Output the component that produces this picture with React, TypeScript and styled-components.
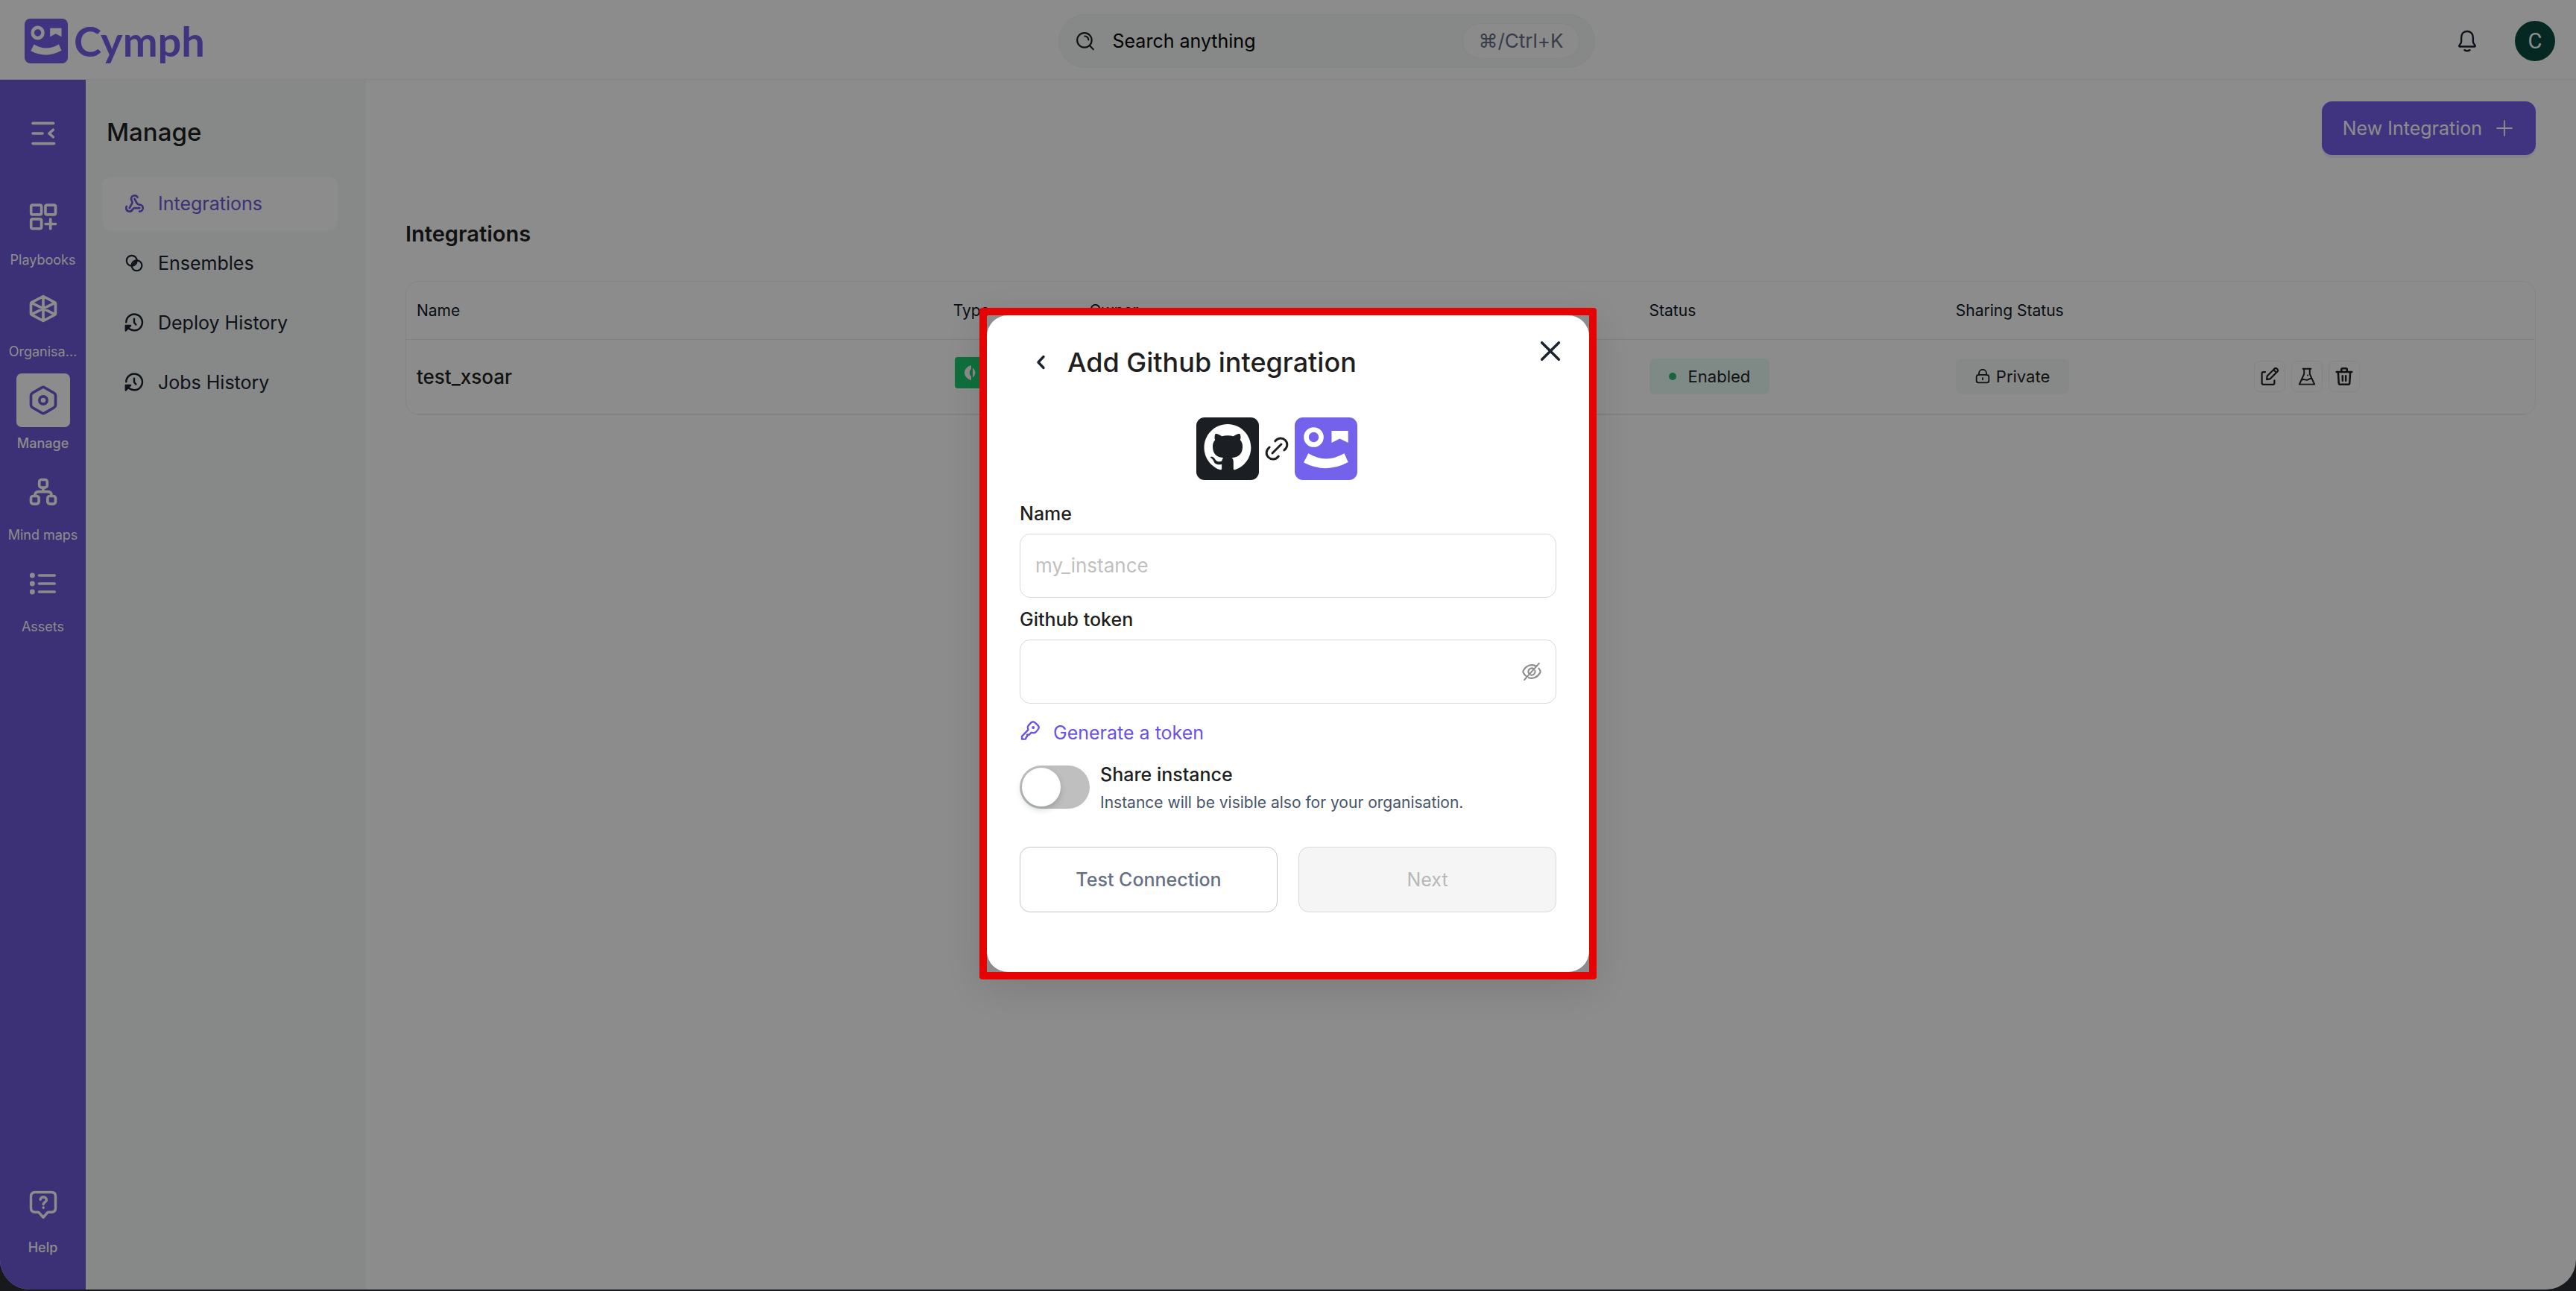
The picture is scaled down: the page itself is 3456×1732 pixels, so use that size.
import React, { useState } from "react";
import styled, { createGlobalStyle, css } from "styled-components";

const purple = "#6d59d8";
const brand = "#7660e9";
const ink = "#1f1f1f";
const navy = "#1b2230";

const GlobalStyle = createGlobalStyle`
  *, *::before, *::after { box-sizing: border-box; }
  body {
    margin: 0;
    background: #2c2e36;
    font-family: Inter, "Noto Sans", sans-serif;
    color: ${ink};
  }
  button, input { font: inherit; color: inherit; }
  button { cursor: pointer; }
  h1, h2, p { margin: 0; }
  a { text-decoration: none; }
`;

/* ---------- icons ---------- */

const Icon = styled.svg.attrs({ viewBox: "0 0 24 24", "aria-hidden": true })<{ $size: number; $stroke?: number }>`
  display: block;
  flex: none;
  width: ${(p) => p.$size}px;
  height: ${(p) => p.$size}px;
  fill: none;
  stroke: currentColor;
  stroke-width: ${(p) => p.$stroke ?? 2};
  stroke-linecap: round;
  stroke-linejoin: round;
`;

const CollapseIcon = () => (
  <Icon $size={38} $stroke={2.3}><path d="M3.2 3.400h17.400M3.200 12h8.200M3.200 20.600h18M20.400 9l-3.400 3 3.400 3" /></Icon>
);
const PlaybooksIcon = () => (
  <Icon $size={44}>
    <rect x="3.1" y="3.3" width="7.6" height="7" rx="1.2" />
    <rect x="13.6" y="3.3" width="7.4" height="7" rx="1.2" />
    <rect x="3.1" y="13.6" width="7.6" height="7" rx="1.2" />
    <path d="M17.300 13.700v7M13.700 17.200h7.300" />
  </Icon>
);
const OrganisationIcon = () => (
  <Icon $size={44} $stroke={2}>
    <path d="M12 3l8.6 4.6q.4.3.4.8v7.2q0 .5-.4.8L12 21l-8.6-4.6q-.4-.3-.4-.8V8.400q0-.5.4-.8zM12 3v18M3.300 7.700l17.400 8.600M20.700 7.700L3.300 16.300" />
  </Icon>
);
const ManageIcon = () => (
  <Icon $size={44}>
    <path d="M11 2.700q1-.6 2 0l6.900 4q1.100.7 1.100 1.900v6.800q0 1.200-1.100 1.900l-6.900 4q-1 .6-2 0l-6.900-4Q3 16.600 3 15.400V8.600q0-1.200 1.100-1.900z" />
    <circle cx="12" cy="12" r="2.800" />
  </Icon>
);
const MindmapIcon = () => (
  <Icon $size={44}>
    <rect x="9.100" y="3" width="5.800" height="5.800" rx="1.700" />
    <rect x="3" y="15" width="5.800" height="5.800" rx="1.700" />
    <rect x="15.200" y="15" width="5.800" height="5.800" rx="1.700" />
    <path d="M12 9v2.800M6 14.600c0-2 .9-2.800 2.600-2.800h6.800c1.700 0 2.600.8 2.600 2.800" />
  </Icon>
);
const AssetsIcon = () => (
  <Icon $size={44}>
    <path d="M9 6h11.300M9 12h11.300M9 18h11.300" />
    <g fill="currentColor" stroke="none">
      <circle cx="4" cy="6" r="1.900" /><circle cx="4" cy="12" r="1.900" /><circle cx="4" cy="18" r="1.900" />
    </g>
  </Icon>
);
const HelpIcon = () => (
  <Icon $size={44} $stroke={1.9}>
    <path d="M6 3h12q3 0 3 3v8.600q0 3-3 3h-2q-.8 0-1.300.7L12 21.400l-2.700-3.100q-.5-.7-1.300-.7H6q-3 0-3-3V6q0-3 3-3z" />
    <path d="M9.900 8.300c.2-1.200 1-1.800 2.200-1.800 1.300 0 2.300.8 2.300 2.100 0 1.600-2.300 1.700-2.300 3.200M12.100 14.200v.1" />
  </Icon>
);
const WebhookIcon = () => (
  <Icon $size={27} $stroke={2.4}>
    <path d="M18 16.980h-5.990c-1.100 0-1.950.94-2.480 1.900A4 4 0 0 1 2 17c.01-.7.200-1.400.57-2" />
    <path d="m6 17 3.130-5.780c.53-.97.1-2.180-.5-3.100a4 4 0 1 1 6.890-4.060" />
    <path d="m12 6 3.130 5.730C15.660 12.700 16.900 13 18 13a4 4 0 0 1 0 8" />
  </Icon>
);
const EnsemblesIcon = () => (
  <Icon $size={26}>
    <circle cx="9" cy="9" r="6.400" /><circle cx="15.200" cy="15" r="6.400" />
    <path d="M10.200 14.200l4.200-4.200" />
  </Icon>
);
const HistoryIcon = () => (
  <Icon $size={28} $stroke={2.1}>
    <path d="M2.800 11.400A9.300 9.300 0 1 1 5.400 18M12 7.400v4.400l2 2.400" />
    <path d="M2.400 21v-5.600h5.400z" fill="currentColor" />
  </Icon>
);
const SearchIcon = () => (
  <Icon $size={26}>
    <circle cx="11" cy="11" r="9" /><path d="M17.600 17.800l4.400 4.600M11.400 6a5 5 0 0 1 4.600 4.600" />
  </Icon>
);
const BellIcon = () => (
  <Icon $size={30} $stroke={1.900}>
    <path d="M12 1.600c-4 0-6.300 2.800-6.300 6.600v4.300c0 1.200-.7 2.300-1.500 3.300-.8 1.100-1.200 2.200-.2 2.200h16c1 0 .6-1.100-.2-2.200-.8-1-1.500-2.100-1.500-3.300V8.200c0-3.800-2.300-6.600-6.300-6.600zM9.200 21.700q2.800 1.700 5.600 0" />
  </Icon>
);
const PlusIcon = () => (<Icon $size={28} $stroke={1.600}><path d="M12 3.500v17M3.500 12h17" /></Icon>);
const LockIcon = () => (
  <Icon $size={20} $stroke={2.200}>
    <rect x="2" y="9.500" width="20" height="12.500" rx="3.500" />
    <path d="M6 9.500V7a6 6 0 0 1 12 0v2.500M12 14.500v2.500" />
  </Icon>
);
const EditIcon = () => (
  <Icon $size={26}>
    <path d="M6.500 6.500H4q-1.600 0-1.600 1.600v12.300Q2.400 22 4 22h12.300q1.600 0 1.600-1.600V17" />
    <path d="M8.400 15.800l.5-4.200L18.300 2.200q1.200-1 2.500.2l.9.900q1.100 1.300.1 2.500l-9.300 9.300zM17 4l3.200 3.200" />
  </Icon>
);
const FlaskIcon = () => (
  <Icon $size={26} $stroke={1.800}>
    <path d="M7 2.500h10M8.500 2.800v6.200L2.600 21.800h18.800L15.500 9V2.800M5.600 16.200c3-1.600 4.800.9 7.200 0s3-2 5-1.500M13 10.500v.1" />
  </Icon>
);
const TrashIcon = () => (
  <Icon $size={26} $stroke={2.300}>
    <path d="M2.500 6.500h19M8.500 6.200V3.500q0-1.500 1.500-1.500h4q1.500 0 1.500 1.500v2.700M4.500 6.800l.8 13.600q.2 1.600 1.700 1.600h10q1.500 0 1.700-1.600l.8-13.600M10 11.400v6M14 11.400v6" />
  </Icon>
);
const ChevronIcon = () => (<Icon $size={24} $stroke={3.400}><path d="M16 4.500L9 12l7 7.500" /></Icon>);
const CloseIcon = () => (<Icon $size={32} $stroke={2.700}><path d="M3.500 3.500l17 17M20.500 3.500l-17 17" /></Icon>);
const LinkIcon = () => (
  <Icon $size={36}>
    <path d="M10.500 5.200c2.600-3.300 6.600-3.300 9-.9 2.500 2.500 2.400 6.200-.9 9M13.500 18.800c-2.600 3.300-6.600 3.300-9 .9-2.500-2.500-2.400-6.200.9-9M8 16l8-8" />
  </Icon>
);
const EyeOffIcon = () => (
  <Icon $size={28} $stroke={1.800}>
    <path d="M17.500 6C12 2.700 5.500 4.800 2.200 11.200q-.4.800 0 1.600c.9 1.900 2 3.300 3.300 4.400M20 8.300c.7.900 1.300 1.800 1.800 2.900q.4.800 0 1.600C18.800 18.600 13.500 20.700 8.500 19M14 8.600A4 4 0 0 0 8.600 14M15.700 10.700A4 4 0 0 1 11 15.900M20.500 2.500l-17 19" />
  </Icon>
);
const KeyIcon = () => (
  <Icon $size={28}>
    <path d="M13.200 2.900q2-1.700 4.300 0l3.500 3.200q1.900 2.100.4 4.300l-2.600 3.200q-1.300 1.400-3.300 1.100l-2.200-.3-2.300 2.500H8.700v2.200l-1.300.7-.3 1.600-.9.600H2.600v-3.300l7.200-7.400-.5-2.600q-.1-1.500.9-2.600z" />
    <circle cx="15.600" cy="8.600" r=".7" fill="currentColor" />
  </Icon>
);

const Mark = styled.svg.attrs({ viewBox: "0 0 84 84", "aria-hidden": true, preserveAspectRatio: "none" })<{ $w: number; $h: number }>`
  display: block;
  flex: none;
  width: ${(p) => p.$w}px;
  height: ${(p) => p.$h}px;
`;
const CymphMark = ({ w, h, fill }: { w: number; h: number; fill: string }) => (
  <Mark $w={w} $h={h}>
    <rect width="84" height="84" rx="11" fill={fill} />
    <circle cx="25.500" cy="26.500" r="10" fill="none" stroke="#fff" strokeWidth="6.600" />
    <path d="M49.500 18h22.200v16l-11.200-5.500-11 5.500z" fill="#fff" />
    <path d="M18.300 48.300Q42 62.500 66.500 48.300L71.700 60Q42 76 12 60.500z" fill="#fff" />
  </Mark>
);
const GithubMark = () => (
  <Mark $w={84} $h={84}>
    <rect width="84" height="84" rx="11" fill="#1b1f23" />
    <path
      transform="translate(10.500 9) scale(3.930)"
      fill="#fff"
      d="M8 0C3.580 0 0 3.580 0 8c0 3.540 2.290 6.530 5.470 7.590.4.070.55-.17.55-.38 0-.19-.01-.82-.01-1.490-2.010.37-2.530-.49-2.690-.94-.09-.23-.48-.94-.82-1.130-.28-.15-.68-.52-.01-.53.63-.01 1.080.58 1.230.82.72 1.210 1.870.87 2.330.66.07-.52.28-.87.51-1.070-1.780-.2-3.640-.89-3.640-3.950 0-.87.31-1.590.82-2.150-.08-.2-.36-1.020.08-2.120 0 0 .67-.21 2.200.82.64-.18 1.320-.27 2-.27s1.360.09 2 .27c1.530-1.040 2.200-.82 2.200-.82.44 1.100.16 1.920.08 2.120.51.56.82 1.270.82 2.150 0 3.070-1.870 3.750-3.650 3.950.29.25.54.73.54 1.480 0 1.070-.01 1.930-.01 2.200 0 .21.15.46.55.38A8.010 8.010 0 0 0 16 8c0-4.420-3.580-8-8-8"
    />
  </Mark>
);

/* ---------- shell ---------- */

const Shell = styled.div`
  display: flex;
  flex-direction: column;
  min-height: calc(100vh - 2px);
  margin-bottom: 2px;
  background: #fff;
  border-radius: 0 0 40px 40px;
  overflow: hidden;
`;
const TopBar = styled.header`
  display: flex;
  align-items: center;
  justify-content: space-between;
  height: 107px;
  padding: 4px 28px 0 33px;
  border-bottom: 1px solid #f0f1f1;
`;
const Brand = styled.a`
  display: flex;
  align-items: center;
  gap: 8px;
  width: 240px;
  color: ${brand};
  font: 700 56px/60px Lato, sans-serif;
`;
const SearchBox = styled.label`
  display: flex;
  align-items: center;
  gap: 24px;
  width: 720px;
  height: 72px;
  padding: 0 20px 0 22px;
  border: 1px solid #f0f3f2;
  border-radius: 36px;
  background: #f5faf8;
`;
const SearchInput = styled.input`
  flex: 1;
  min-width: 0;
  padding: 0;
  border: 0;
  outline: 0;
  background: none;
  font-size: 25px;
  &::placeholder { color: #000; opacity: 1; }
`;
const Shortcut = styled.kbd`
  padding: 0 20px;
  border: 1px solid #f0f3f2;
  border-radius: 24px;
  background: #fdfdfd;
  color: #667085;
  font: 400 26px/46px Inter, "DejaVu Sans", sans-serif;
`;
const Account = styled.div`
  display: flex;
  align-items: center;
  gap: 40px;
`;
const PlainButton = styled.button`
  display: grid;
  place-items: center;
  width: 48px;
  height: 48px;
  padding: 0;
  border: 0;
  background: none;
  color: ${navy};
`;
const Avatar = styled.button`
  width: 54px;
  height: 54px;
  padding: 0;
  border: 0;
  border-radius: 50%;
  background: #0a4a40;
  color: #fff;
  font: 400 29px/54px Roboto, sans-serif;
`;
const Body = styled.div`
  display: flex;
  flex: 1;
`;

/* ---------- sidebar ---------- */

const Rail = styled.nav`
  display: flex;
  flex-direction: column;
  align-items: center;
  width: 115px;
  padding: 48px 0 43px;
  background: ${purple};
  color: #fff;
`;
const RailToggle = styled(PlainButton)`
  margin-bottom: 52px;
  color: #fff;
`;
const RailList = styled.div`
  display: flex;
  flex: 1;
  flex-direction: column;
  gap: 16px;
`;
const RailItem = styled.a<{ $active?: boolean; $last?: boolean }>`
  display: flex;
  flex-direction: column;
  align-items: center;
  gap: 8px;
  color: #fff;
  font-size: 18px;
  font-weight: ${(p) => (p.$active ? 500 : 400)};
  line-height: 27px;
  ${(p) => p.$last && css`margin-top: auto;`}
`;
const RailIcon = styled.span<{ $active?: boolean }>`
  display: grid;
  place-items: center;
  width: 72px;
  height: 72px;
  border-radius: 7px;
  ${(p) => p.$active && css`background: #fff; color: ${purple};`}
`;
const SubNav = styled.aside`
  width: 375px;
  padding: 48px 36px 0 22px;
  border-right: 1px solid #eff2f1;
  background: #f6faf8;
`;
const SubTitle = styled.h1`
  margin-bottom: 38px;
  padding-left: 6px;
  font-size: 33px;
  font-weight: 500;
  line-height: 44px;
`;
const SubList = styled.div`
  display: flex;
  flex-direction: column;
  gap: 8px;
`;
const SubLink = styled.a<{ $active?: boolean }>`
  display: flex;
  align-items: center;
  gap: 18px;
  height: 72px;
  padding: 0 29px;
  border-radius: 12px;
  background: ${(p) => (p.$active ? "#fff" : "transparent")};
  color: ${(p) => (p.$active ? purple : navy)};
  font-size: 25px;
`;
const SubIcon = styled.span`
  display: grid;
  place-items: center;
  width: 28px;
`;

/* ---------- main ---------- */

const Main = styled.main`
  flex: 1;
  min-width: 0;
  padding: 29px 54px 0;
`;
const Actions = styled.div`
  display: flex;
  justify-content: flex-end;
  margin-bottom: 86px;
`;
const PrimaryButton = styled.button`
  display: flex;
  align-items: center;
  gap: 16px;
  height: 72px;
  padding: 0 28px;
  border: 0;
  border-radius: 14px;
  background: ${brand};
  box-shadow: 0 4px 0 rgba(109, 89, 216, 0.1);
  color: #fff;
  font-size: 25px;
`;
const Heading = styled.h2`
  margin-bottom: 43px;
  font-size: 29px;
  font-weight: 600;
  line-height: 40px;
`;
const TableFrame = styled.div`
  overflow: hidden;
  border: 1px solid #f0f0f0;
  border-radius: 18px;
`;
const Table = styled.table`
  width: 100%;
  border-collapse: collapse;
  table-layout: fixed;
`;
const Th = styled.th<{ $w: number }>`
  width: ${(p) => p.$w}%;
  height: 77px;
  padding: 0 14px;
  border-bottom: 1px solid #eaeaea;
  color: #101828;
  font-size: 21px;
  font-weight: 400;
  text-align: left;
`;
const Td = styled.td<{ $strong?: boolean }>`
  height: 100px;
  padding: 0 14px;
  border-bottom: 1px solid #eaeaea;
  font-size: ${(p) => (p.$strong ? 26 : 22)}px;
  font-weight: ${(p) => (p.$strong ? 500 : 400)};
`;
const TypeBadge = styled.svg.attrs({ viewBox: "0 0 42 42", "aria-hidden": true })`
  display: block;
  width: 42px;
  height: 42px;
  margin: 0 0 10px 2px;
`;
const Badge = styled.span<{ $tone: string }>`
  display: inline-flex;
  align-items: center;
  gap: 8px;
  height: 48px;
  padding: 0 26px;
  border-radius: 8px;
  background: ${(p) => p.$tone};
  font-size: 22px;
`;
const Dot = styled.span`
  width: 10px;
  height: 10px;
  margin-right: 8px;
  border-radius: 50%;
  background: #2bb673;
`;
const RowActions = styled.div`
  display: flex;
  gap: 8px;
`;
const RowButton = styled(PlainButton)`
  width: 42px;
  height: 42px;
  border: 1px solid #f0f0f0;
  border-radius: 8px;
  color: ${ink};
`;

/* ---------- dialog ---------- */

const Overlay = styled.div`
  position: fixed;
  inset: 0;
  display: grid;
  place-items: center;
  padding-bottom: 6px;
  background: rgba(0, 0, 0, 0.45);
`;
const Frame = styled.div`
  width: 828px;
  border: 10px solid #e60303;
  border-radius: 4px;
  box-shadow: 0 14px 56px rgba(0, 0, 0, 0.12);
`;
const Dialog = styled.form`
  position: relative;
  display: flex;
  flex-direction: column;
  padding: 39px 44px 80px;
  border-radius: 28px;
  background: #fff;
`;
const CloseButton = styled(PlainButton)`
  position: absolute;
  top: 24px;
  right: 28px;
`;
const DialogHead = styled.div`
  display: flex;
  align-items: center;
  gap: 12px;
  margin: 0 0 50px 4px;
`;
const DialogTitle = styled.h2`
  font-size: 36px;
  font-weight: 500;
  line-height: 48px;
`;
const LogoRow = styled.div`
  display: flex;
  align-items: center;
  justify-content: center;
  gap: 6px;
  margin-bottom: 28px;
  padding-right: 30px;
`;
const Field = styled.div`
  display: flex;
  flex-direction: column;
  gap: 10px;
  margin-bottom: 12px;
`;
const Label = styled.label`
  font-size: 25px;
  font-weight: 500;
  line-height: 34px;
`;
const InputBox = styled.div`
  display: flex;
  align-items: center;
  height: 86px;
  padding: 0 18px 0 20px;
  border: 1px solid #d9d9d9;
  border-radius: 14px;
`;
const TextInput = styled.input`
  flex: 1;
  min-width: 0;
  padding: 0;
  border: 0;
  outline: 0;
  background: none;
  font-size: 26px;
  &::placeholder { color: #bfbfbf; opacity: 1; }
`;
const EyeButton = styled(PlainButton)`
  width: 28px;
  color: #8c8c8c;
`;
const TokenLink = styled.a`
  display: flex;
  gap: 17px;
  margin: 10px 0 20px;
  color: #6a52e0;
  font-size: 25px;
  line-height: 34px;
`;
const ShareRow = styled.div`
  display: flex;
  align-items: center;
  gap: 14px;
  margin-bottom: 40px;
`;
const Switch = styled.input`
  appearance: none;
  position: relative;
  width: 94px;
  height: 58px;
  margin: 0 0 4px;
  border-radius: 29px;
  background: #bfbfbf;
  cursor: pointer;
  &::after {
    content: "";
    position: absolute;
    top: 3px;
    left: 3px;
    width: 52px;
    height: 52px;
    border-radius: 50%;
    background: #fff;
    box-shadow: 0 4px 8px rgba(0, 35, 11, 0.2);
  }
  &:checked { background: ${brand}; }
  &:checked::after { left: 39px; }
`;
const ShareLabel = styled.label`
  display: block;
  font-size: 25px;
  font-weight: 500;
  line-height: 38px;
`;
const ShareNote = styled.p`
  color: #475467;
  font-size: 21px;
  line-height: 38px;
`;
const Footer = styled.div`
  display: grid;
  grid-template-columns: 1fr 1fr;
  gap: 28px;
`;
const FooterButton = styled.button`
  height: 88px;
  border: 1px solid #c2c6cf;
  border-radius: 14px;
  background: #fff;
  color: #667085;
  font-size: 25px;
  font-weight: 500;
  &:disabled {
    border-color: #d9d9d9;
    background: #f5f5f5;
    color: #b8b8b8;
    font-weight: 400;
    cursor: default;
  }
`;

const railItems = [
  { label: "Playbooks", icon: <PlaybooksIcon /> },
  { label: "Organisa...", icon: <OrganisationIcon /> },
  { label: "Manage", icon: <ManageIcon />, active: true },
  { label: "Mind maps", icon: <MindmapIcon /> },
  { label: "Assets", icon: <AssetsIcon /> },
];
const subItems = [
  { label: "Integrations", icon: <WebhookIcon />, active: true },
  { label: "Ensembles", icon: <EnsemblesIcon /> },
  { label: "Deploy History", icon: <HistoryIcon /> },
  { label: "Jobs History", icon: <HistoryIcon /> },
];
const columns = [
  { label: "Name", width: 25.2 },
  { label: "Type", width: 6.4 },
  { label: "Owner", width: 26.3 },
  { label: "Status", width: 14.4 },
  { label: "Sharing Status", width: 14 },
  { label: "", width: 13.7 },
];

export default function App() {
  const [hidden, setHidden] = useState(true);
  return (
    <>
      <GlobalStyle />
      <Shell>
        <TopBar>
          <Brand href="#"><CymphMark w={58} h={60} fill={brand} />Cymph</Brand>
          <SearchBox>
            <SearchIcon />
            <SearchInput placeholder="Search anything" aria-label="Search anything" />
            <Shortcut>⌘/Ctrl+K</Shortcut>
          </SearchBox>
          <Account>
            <PlainButton aria-label="Notifications"><BellIcon /></PlainButton>
            <Avatar>C</Avatar>
          </Account>
        </TopBar>
        <Body>
          <Rail>
            <RailToggle aria-label="Collapse menu"><CollapseIcon /></RailToggle>
            <RailList>
              {railItems.map((item) => (
                <RailItem key={item.label} href="#" $active={item.active}>
                  <RailIcon $active={item.active}>{item.icon}</RailIcon>
                  {item.label}
                </RailItem>
              ))}
              <RailItem href="#" $active $last>
                <RailIcon><HelpIcon /></RailIcon>
                Help
              </RailItem>
            </RailList>
          </Rail>
          <SubNav>
            <SubTitle>Manage</SubTitle>
            <SubList>
              {subItems.map((item) => (
                <SubLink key={item.label} href="#" $active={item.active}>
                  <SubIcon>{item.icon}</SubIcon>
                  {item.label}
                </SubLink>
              ))}
            </SubList>
          </SubNav>
          <Main>
            <Actions>
              <PrimaryButton>New Integration <PlusIcon /></PrimaryButton>
            </Actions>
            <Heading>Integrations</Heading>
            <TableFrame>
              <Table>
                <thead>
                  <tr>{columns.map((c) => <Th key={c.label} $w={c.width}>{c.label}</Th>)}</tr>
                </thead>
                <tbody>
                  <tr>
                    <Td $strong>test_xsoar</Td>
                    <Td>
                      <TypeBadge>
                        <rect width="42" height="42" rx="4" fill="#1bcc6d" />
                        <path d="M22 11c-5 1.500-9 5-9 10s4 8.500 9 10v-5c-3-2-3-8 0-10zM24 14.500c4.500 3.500 4.500 9.500 0 13z" fill="#fff" />
                      </TypeBadge>
                    </Td>
                    <Td />
                    <Td><Badge $tone="#e7f9f5"><Dot />Enabled</Badge></Td>
                    <Td><Badge $tone="#f6faf8"><LockIcon />Private</Badge></Td>
                    <Td>
                      <RowActions>
                        <RowButton aria-label="Edit"><EditIcon /></RowButton>
                        <RowButton aria-label="Test"><FlaskIcon /></RowButton>
                        <RowButton aria-label="Delete"><TrashIcon /></RowButton>
                      </RowActions>
                    </Td>
                  </tr>
                </tbody>
              </Table>
            </TableFrame>
          </Main>
        </Body>
      </Shell>
      <Overlay>
        <Frame>
          <Dialog role="dialog" aria-labelledby="dialog-title" onSubmit={(e) => e.preventDefault()}>
            <CloseButton type="button" aria-label="Close"><CloseIcon /></CloseButton>
            <DialogHead>
              <PlainButton type="button" aria-label="Back"><ChevronIcon /></PlainButton>
              <DialogTitle id="dialog-title">Add Github integration</DialogTitle>
            </DialogHead>
            <LogoRow>
              <GithubMark />
              <LinkIcon />
              <CymphMark w={84} h={84} fill="#7562ec" />
            </LogoRow>
            <Field>
              <Label htmlFor="name">Name</Label>
              <InputBox><TextInput id="name" placeholder="my_instance" /></InputBox>
            </Field>
            <Field>
              <Label htmlFor="token">Github token</Label>
              <InputBox>
                <TextInput id="token" type={hidden ? "password" : "text"} />
                <EyeButton type="button" aria-label="Show token" onClick={() => setHidden(!hidden)}>
                  <EyeOffIcon />
                </EyeButton>
              </InputBox>
            </Field>
            <TokenLink href="#"><KeyIcon />Generate a token</TokenLink>
            <ShareRow>
              <Switch id="share" type="checkbox" />
              <div>
                <ShareLabel htmlFor="share">Share instance</ShareLabel>
                <ShareNote>Instance will be visible also for your organisation.</ShareNote>
              </div>
            </ShareRow>
            <Footer>
              <FooterButton type="button">Test Connection</FooterButton>
              <FooterButton type="submit" disabled>Next</FooterButton>
            </Footer>
          </Dialog>
        </Frame>
      </Overlay>
    </>
  );
}
